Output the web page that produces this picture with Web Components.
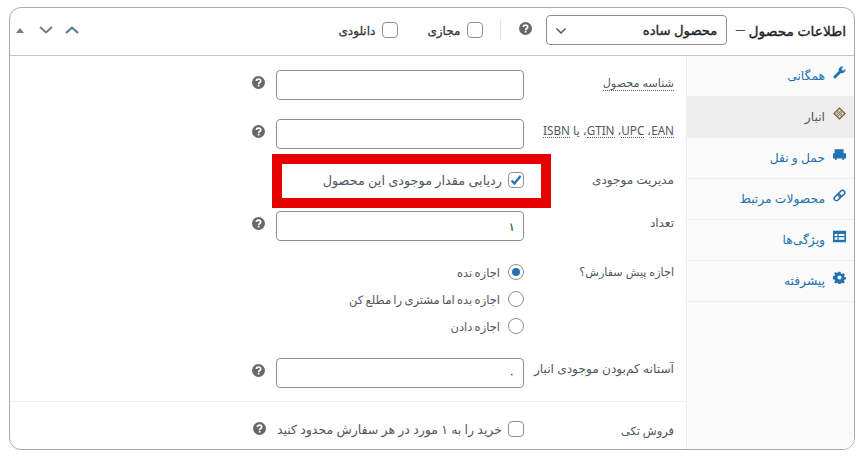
<!DOCTYPE html>
<html lang="fa" dir="rtl">
<head>
<meta charset="utf-8">
<title>اطلاعات محصول</title>
<style>
  html, body { margin: 0; padding: 0; background: #fff; }
  body { font-family: "Noto Sans", "DejaVu Sans", sans-serif; font-size: 12px; color: #50575e; }
</style>
</head>
<body>

<product-panel>
  <panel-header slot="header"></panel-header>
  <tab-item slot="tabs" icon="wrench">همگانی</tab-item>
  <tab-item slot="tabs" icon="inventory" active>انبار</tab-item>
  <tab-item slot="tabs" icon="truck">حمل و نقل</tab-item>
  <tab-item slot="tabs" icon="link">محصولات مرتبط</tab-item>
  <tab-item slot="tabs" icon="card">ویژگی‌ها</tab-item>
  <tab-item slot="tabs" icon="gear">پیشرفته</tab-item>

  <form-field style="--top:14px" help>
    <span slot="label" style="font-size:11.2px;padding-top:3px"><dot-abbr>شناسه محصول</dot-abbr></span>
    <text-box></text-box>
  </form-field>
  <form-field style="--top:19px" help>
    <span slot="label" style="font-size:11.7px;padding-top:1px"><dot-abbr>EAN</dot-abbr>، <dot-abbr>UPC</dot-abbr>، <dot-abbr>GTIN</dot-abbr>، یا <dot-abbr>ISBN</dot-abbr></span>
    <text-box></text-box>
  </form-field>
  <form-field style="--top:21px">
    <span slot="label">مدیریت موجودی</span>
    <check-box checked style="font-size:12.8px">ردیابی مقدار موجودی این محصول</check-box>
  </form-field>
  <form-field style="--top:21px" help>
    <span slot="label" style="padding-top:2px">تعداد</span>
    <text-box value="۱"></text-box>
  </form-field>
  <form-field style="--top:21px">
    <span slot="label" style="font-size:11.2px">اجازه پیش سفارش؟</span>
    <radio-group>
      <radio-item checked>اجازه نده</radio-item>
      <radio-item>اجازه بده اما مشتری را مطلع کن</radio-item>
      <radio-item>اجازه دادن</radio-item>
    </radio-group>
  </form-field>
  <form-field style="--top:22px" help>
    <span slot="label" style="font-size:12.2px;padding-top:1px">آستانه کم‌بودن موجودی انبار</span>
    <text-box value="۰"></text-box>
  </form-field>
  <form-field divided help>
    <span slot="label" style="font-size:11.4px;padding-top:2px">فروش تکی</span>
    <check-box style="font-size:12.5px">خرید را به ۱ مورد در هر سفارش محدود کنید</check-box>
  </form-field>
</product-panel>

<script>
const ICONS = {
  help: '<circle cx="6.5" cy="6.5" r="6.5" fill="#646970"/><path d="M4.4 5.1c0-1.3 1-2 2.2-2s2.1.7 2.1 1.8c0 1.6-2 1.5-2 3" fill="none" stroke="#fff" stroke-width="1.7"/><rect x="5.8" y="8.8" width="1.7" height="1.7" fill="#fff"/>',
  wrench: '<path d="M15.2 3.4l-2.7 2.5-2.2-2.2L12.8 1c-1.7-.6-3.6-.2-4.7 1-1.1 1.1-1.4 2.7-.9 4.1L1 12.2c-.7.7-.7 1.8 0 2.500.7.7 1.800.7 2.500 0l6.200-6c1.400.5 3 .2 4.100-.9 1.200-1.100 1.900-3 1.400-4.400z" fill="currentColor"/>',
  inventory: '<path d="M8 0l8 8-8 8-8-8z" fill="#8a6a45"/><path d="M8 2.600L13.400 8 8 13.400 2.600 8z" fill="#d7d2c8"/><path d="M6 4.700l5.300 5.300M4.700 6L10 11.300M10 4.700L4.700 10M11.300 6L6 11.300" stroke="#6d6259" stroke-width=".9"/>',
  truck: '<path d="M2 1.500h11v5h3v6.500H0V6.500h2z" fill="currentColor"/><circle cx="3.500" cy="13.500" r="1.300" fill="currentColor"/><circle cx="12.500" cy="13.500" r="1.300" fill="currentColor"/>',
  link: '<g fill="none" stroke="currentColor" stroke-width="1.900"><rect x="6" y="3" width="9" height="5.400" rx="2.700" transform="rotate(-45 10.500 5.700)"/><rect x="1" y="7.600" width="9" height="5.400" rx="2.700" transform="rotate(-45 5.500 10.300)"/></g>',
  card: '<path d="M0 1h16v14H0z" fill="currentColor"/><path d="M2 5h3.500v2.500H2zM7 5h7v2.500H7zM2 9h3.500v3H2zM7 9h7v3H7z" fill="#fff"/>',
  gear: '<path d="M6.700 1h2.600l.4 2 1.300.6 1.800-1.100 1.800 1.800-1.100 1.800.6 1.300 2 .4v2.400l-2 .4-.6 1.300 1.100 1.800-1.800 1.800-1.800-1.100-1.300.6-.4 2H6.700l-.4-2-1.300-.6-1.800 1.100-1.800-1.800 1.100-1.800-.6-1.300-2-.4V6.600l2-.4.6-1.300-1.100-1.800 1.800-1.800L5 2.400l1.300-.6z" fill="currentColor"/><circle cx="8" cy="8" r="2.500" fill="#fafafa"/>'
};

// small helper so every element sets up its shadow root the same way
function shadow(el, html) {
  el.attachShadow({ mode: 'open' }).innerHTML = html;
}

class HelpTip extends HTMLElement {
  constructor() {
    super();
    shadow(this, `<style>:host{display:inline-flex;width:13px;height:13px}svg{display:block}</style>
      <svg width="13" height="13" viewBox="0 0 13 13">${ICONS.help}</svg>`);
  }
}

class DotAbbr extends HTMLElement {
  constructor() {
    super();
    shadow(this, `<style>:host{display:inline-block;line-height:14px;border-bottom:1px dotted #50575e}</style><slot></slot>`);
  }
}

class ProductPanel extends HTMLElement {
  constructor() {
    super();
    shadow(this, `<style>
      :host { display: block; box-sizing: border-box; width: 846px; height: 443px; margin: 7px 9px 0 9px;
        border: 1px solid #a7aaad; border-radius: 12px; overflow: hidden; background: #fff; direction: rtl; }
      .head { height: 47px; border-bottom: 1px solid #c3c4c7; }
      .body { display: flex; height: 394px; }
      .tabs { width: 167px; flex: none; background: #fafafa; border-left: 1px solid #eee; }
      .form { flex: 1; min-width: 0; position: relative; padding-right: 12px; display: flex; flex-direction: column; }
      .mark { position: absolute; top: 98px; left: 262px; width: 279px; height: 54px; box-sizing: border-box; border: 10px solid #e60000; pointer-events: none; }
    </style>
    <div class="head"><slot name="header"></slot></div>
    <div class="body">
      <div class="tabs"><slot name="tabs"></slot></div>
      <div class="form"><slot></slot><div class="mark"></div></div>
    </div>`);
  }
}

class PanelHeader extends HTMLElement {
  constructor() {
    super();
    shadow(this, `<style>
      :host { display: flex; align-items: center; box-sizing: border-box; height: 47px; padding: 0 8px 3px 6px; color: #1d2327; font-size: 12px; }
      .title, .select span { -webkit-text-stroke: .35px currentColor; white-space: nowrap; }
      .title { font-size: 13.8px; margin-left: 8px; }
      .title small { font-size: 9.5px; vertical-align: 3px; }
      .select span { font-size: 13.2px; }
      .select { box-sizing: border-box; width: 181px; height: 30px; display: flex; align-items: center; justify-content: space-between;
        border: 1px solid #8c8f94; border-radius: 4px; padding: 0 9px 0 7px; background: #fff; margin-left: 14px; }
      .select svg { margin-top: 2px; }
      help-tip { margin-top: -3px; }
      .sep { width: 1px; height: 20px; background: #e2e4e7; margin: 0 18px 0 17px; }
      .opt { display: inline-flex; align-items: center; gap: 7px; color: #32373c; -webkit-text-stroke: .3px currentColor; white-space: nowrap; }
      .opt i { box-sizing: border-box; width: 16px; height: 16px; border: 1px solid #8c8f94; border-radius: 4px; background: #fff; }
      .opt + .opt { margin-right: 29px; }
      .arrows { margin-right: auto; display: flex; align-items: center; direction: ltr; }
      .arrows .down { margin: 0 12px 0 15px; }
      svg { display: block; }
    </style>
    <span class="title">اطلاعات محصول <small>—</small></span>
    <div class="select"><span>محصول ساده</span>
      <svg width="14" height="14" viewBox="0 0 14 14"><path d="M2.500 4.500l4.500 4.500 4.500-4.500" fill="none" stroke="#50575e" stroke-width="1.500"/></svg></div>
    <help-tip></help-tip>
    <div class="sep"></div>
    <label class="opt"><i></i>مجازی</label>
    <label class="opt"><i></i>دانلودی</label>
    <div class="arrows">
      <svg width="8" height="5" viewBox="0 0 8 5"><path d="M4 0l4 5H0z" fill="#787c82"/></svg>
      <svg class="down" width="14" height="8" viewBox="0 0 14 8"><path d="M1 1l6 5.500L13 1" fill="none" stroke="#787c82" stroke-width="2"/></svg>
      <svg width="14" height="8" viewBox="0 0 14 8"><path d="M1 7l6-5.500L13 7" fill="none" stroke="#50758f" stroke-width="2"/></svg>
    </div>`);
  }
}

class TabItem extends HTMLElement {
  constructor() {
    super();
    const active = this.hasAttribute('active');
    shadow(this, `<style>
      :host { display: flex; align-items: center; gap: 8px; box-sizing: border-box; height: 41px; padding: 0 8px 1px 0;
        border-bottom: 1px solid #eee; color: ${active ? '#50575e' : '#2271b1'}; background: ${active ? '#eee' : 'transparent'}; font-size: 12.3px; }
      svg { display: block; flex: none; margin-bottom: 6px; }
    </style>
    <svg width="13" height="13" viewBox="0 0 16 16">${ICONS[this.getAttribute('icon')]}</svg><slot></slot>`);
  }
}

class FormField extends HTMLElement {
  constructor() {
    super();
    shadow(this, `<style>
      :host { display: grid; grid-template-columns: 150px auto; justify-content: start; align-items: start;
        margin-top: var(--top, 0); font-size: 12px; color: #50575e; }
      :host([divided]) { margin-right: -12px; padding: 17px 12px 0 0; margin-top: 13px; border-top: 1px solid #eee; height: 46px; box-sizing: border-box; }
      .label { line-height: 20px; white-space: nowrap; }
      ::slotted(span) { display: inline-block; }
      .ctl { display: flex; align-items: flex-start; gap: 11px; }
      help-tip { margin-top: 6px; }
      :host([divided]) help-tip { margin-top: 3px; }
    </style>
    <div class="label"><slot name="label"></slot></div>
    <div class="ctl"><slot></slot>${this.hasAttribute('help') ? '<help-tip></help-tip>' : ''}</div>`);
  }
}

class TextBox extends HTMLElement {
  constructor() {
    super();
    shadow(this, `<style>
      :host { display: block; box-sizing: border-box; width: 248px; height: 30px; padding: 0 8px; line-height: 29px;
        border: 1px solid #8c8f94; border-radius: 4px; background: #fff; color: #2c3338; font-size: 12px; }
    </style>${this.getAttribute('value') || ''}`);
  }
}

class CheckBox extends HTMLElement {
  constructor() {
    super();
    const tick = this.hasAttribute('checked')
      ? '<svg width="14" height="14" viewBox="0 0 14 14"><path d="M2.500 7.500l3 3 6-7.500" fill="none" stroke="#2271b1" stroke-width="2.200"/></svg>' : '';
    shadow(this, `<style>
      :host { display: inline-flex; align-items: center; gap: 6px; height: 20px; white-space: nowrap; color: #50575e; }
      i { box-sizing: border-box; width: 16px; height: 16px; border: 1px solid #8c8f94; border-radius: 4px; background: #fff; display: flex; align-items: center; justify-content: center; }
    </style><i>${tick}</i><slot></slot>`);
  }
}

class RadioGroup extends HTMLElement {
  constructor() {
    super();
    shadow(this, `<style>:host { display: flex; flex-direction: column; gap: 7px; font-size: 11.5px; word-spacing: -.7px; }</style><slot></slot>`);
  }
}

class RadioItem extends HTMLElement {
  constructor() {
    super();
    const dot = this.hasAttribute('checked') ? '<b></b>' : '';
    shadow(this, `<style>
      :host { display: flex; align-items: center; gap: 8px; height: 20px; white-space: nowrap; color: #50575e; }
      i { box-sizing: border-box; width: 16px; height: 16px; border: 1px solid #8c8f94; border-radius: 50%; background: #fff; display: flex; align-items: center; justify-content: center; }
      b { width: 8px; height: 8px; border-radius: 50%; background: #2271b1; }
    </style><i>${dot}</i><slot></slot>`);
  }
}

customElements.define('help-tip', HelpTip);
customElements.define('dot-abbr', DotAbbr);
customElements.define('product-panel', ProductPanel);
customElements.define('panel-header', PanelHeader);
customElements.define('tab-item', TabItem);
customElements.define('form-field', FormField);
customElements.define('text-box', TextBox);
customElements.define('check-box', CheckBox);
customElements.define('radio-group', RadioGroup);
customElements.define('radio-item', RadioItem);
</script>
</body>
</html>
